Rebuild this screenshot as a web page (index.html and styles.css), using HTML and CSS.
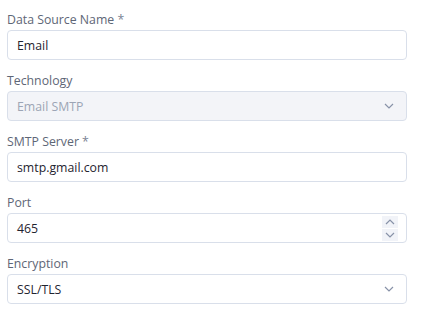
FILE: index.html
```html
<!DOCTYPE html>
<html lang="en">
<head>
  <meta charset="UTF-8" />
  <title>Data Source</title>
  <link rel="stylesheet" href="styles.css">
</head>
<body>
  <form class="ds-form">
    <div class="field">
      <label>Data Source Name <span class="req">*</span></label>
      <div class="box">Email</div>
    </div>

    <div class="field">
      <label>Technology</label>
      <div class="box disabled">
        <span>Email SMTP</span>
        <svg class="chev" width="10" height="6" viewBox="0 0 10 6"><path d="M1 1l4 4 4-4" fill="none" stroke="currentColor" stroke-width="1.2"/></svg>
      </div>
    </div>

    <div class="field">
      <label>SMTP Server <span class="req">*</span></label>
      <div class="box">smtp.gmail.com</div>
    </div>

    <div class="field">
      <label>Port</label>
      <div class="box">
        <span>465</span>
        <div class="spin">
          <span><svg width="10" height="6" viewBox="0 0 10 6"><path d="M1 5l4-4 4 4" fill="none" stroke="currentColor" stroke-width="1.2"/></svg></span>
          <span><svg width="10" height="6" viewBox="0 0 10 6"><path d="M1 1l4 4 4-4" fill="none" stroke="currentColor" stroke-width="1.2"/></svg></span>
        </div>
      </div>
    </div>

    <div class="field">
      <label>Encryption</label>
      <div class="box">
        <span>SSL/TLS</span>
        <svg class="chev" width="10" height="6" viewBox="0 0 10 6"><path d="M1 1l4 4 4-4" fill="none" stroke="currentColor" stroke-width="1.2"/></svg>
      </div>
    </div>
  </form>
</body>
</html>
```

FILE: styles.css
```css
body {
  margin: 0;
  background: #ffffff;
  font-family: "Open Sans", "Noto Sans", sans-serif;
  font-size: 12.3px;
  color: #1f2430;
}
.ds-form {
  width: 400px;
  padding: 11px 0 0 7px;
}
.field {
  margin-bottom: 12px;
}
.field label {
  display: block;
  height: 16px;
  line-height: 16px;
  padding-top: 1px;
  margin-bottom: 2px;
  color: #5e6676;
}
.req {
  color: #7a8394;
}
.box {
  box-sizing: border-box;
  height: 30px;
  border: 1px solid #d9dfea;
  border-radius: 4px;
  padding: 0 10px 0 9px;
  display: flex;
  align-items: center;
  justify-content: space-between;
  background: #fff;
}
.box.disabled {
  background: #f3f4f8;
  color: #9ca5b5;
}
.chev {
  color: #8892a8;
  margin-right: 2px;
}
.spin {
  display: flex;
  flex-direction: column;
  gap: 1px;
  margin-right: -2px;
}
.spin span {
  width: 16px;
  height: 12px;
  background: #f1f3f8;
  display: flex;
  align-items: center;
  justify-content: center;
  color: #8892a8;
}
```
